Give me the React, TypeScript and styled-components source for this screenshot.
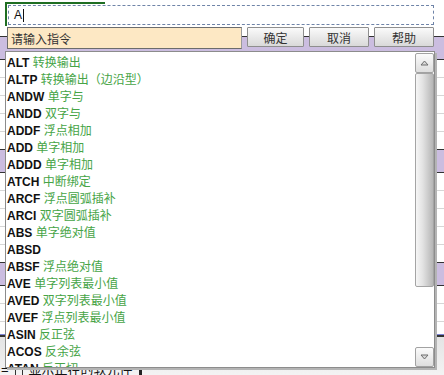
import styled, { createGlobalStyle } from 'styled-components';

const GlobalStyle = createGlobalStyle`
  html, body {
    margin: 0;
    padding: 0;
    background: #fff;
  }
  body {
    font-family: 'Liberation Sans', 'Noto Sans CJK SC', sans-serif;
  }
`;

const Screen = styled.div`
  position: relative;
  width: 444px;
  height: 375px;
  overflow: hidden;
  background: #fff;
`;

// spreadsheet behind the dialog
const Sheet = styled.div`
  display: flex;
  flex-direction: column;
`;

const Band = styled.div<{ $h: number; $bg?: string; $ruled?: boolean }>`
  flex-shrink: 0;
  height: ${(p) => p.$h}px;
  background: ${(p) =>
    p.$ruled
      ? 'repeating-linear-gradient(to bottom, #fff 0, #fff 17px, #d6d6d6 17px, #d6d6d6 18px)'
      : p.$bg ?? '#fff'};
`;

const StatusRow = styled.div`
  flex-shrink: 0;
  height: 40px;
  display: flex;
  align-items: flex-end;
  gap: 6px;
  background: linear-gradient(to bottom, #e4e4e4, #f4f4f4);
  font-size: 13px;
  line-height: 15px;
  color: #111;
  padding-left: 1px;
`;

const StatusBar = styled.span`
  width: 1px;
  height: 13px;
  background: #333;
`;

const StatusBlock = styled.span`
  width: 3px;
  height: 11px;
  background: #222;
`;

const Dialog = styled.div`
  position: absolute;
  left: 5px;
  top: 2px;
  width: 432px;
  display: flex;
  flex-direction: column;
`;

const CommandCell = styled.div`
  position: relative;
  padding: 3px 0 0 3px;
  &::before {
    content: '';
    position: absolute;
    left: 0;
    top: 0;
    width: 100px;
    height: 2px;
    background: #1f6e22;
  }
  &::after {
    content: '';
    position: absolute;
    left: 0;
    top: 0;
    width: 2px;
    height: 24px;
    background: #1f6e22;
  }
`;

const CommandInput = styled.div`
  box-sizing: border-box;
  width: 426px;
  height: 20px;
  border: 1px dashed #6f84a8;
  background: #fff;
  display: flex;
  align-items: center;
  padding-left: 5px;
  font-size: 12px;
  color: #111;
`;

const Caret = styled.span`
  width: 1px;
  height: 13px;
  background: #111;
  margin-left: 1px;
`;

const ActionRow = styled.div`
  display: flex;
  align-items: flex-start;
  gap: 5px;
  margin-top: 2px;
  padding-left: 2px;
`;

const Prompt = styled.div`
  box-sizing: border-box;
  width: 235px;
  height: 22px;
  background: #fde8c4;
  border: 1px solid #6c6c6c;
  border-right-color: #9a9a9a;
  display: flex;
  align-items: center;
  padding-left: 3px;
  font-size: 12px;
  color: #333;
`;

const Button = styled.button<{ $w: number }>`
  box-sizing: border-box;
  width: ${(p) => p.$w}px;
  height: 20px;
  margin: 0;
  padding: 0;
  border: 1px solid #8e8e8e;
  border-radius: 1px;
  background: linear-gradient(to bottom, #fafafa, #e6e6e6 60%, #d9d9d9);
  font-family: 'Noto Sans CJK SC', sans-serif;
  font-size: 12px;
  color: #333;
`;

const ListBox = styled.div`
  box-sizing: border-box;
  width: 430px;
  height: 317px;
  margin-top: 2px;
  border: 1px solid #8c8c8c;
  background: #fff;
  box-shadow: 2px 2px 0 #b4b4b4;
  display: flex;
`;

const Items = styled.div`
  flex: 1;
  overflow: hidden;
  padding: 1px 0 0 1px;
`;

const Item = styled.div`
  height: 17px;
  line-height: 17px;
  white-space: nowrap;
  font-size: 12px;
`;

const Code = styled.span`
  font-family: 'Liberation Sans', sans-serif;
  font-weight: bold;
  color: #111;
`;

const Desc = styled.span`
  font-family: 'Noto Sans CJK SC', sans-serif;
  color: #46a446;
`;

const ScrollBar = styled.div`
  width: 19px;
  display: flex;
  flex-direction: column;
  padding-top: 1px;
`;

const ScrollButton = styled.div`
  box-sizing: border-box;
  height: 20px;
  border: 1px solid #a2a2a2;
  border-radius: 2px;
  background: linear-gradient(to bottom, #fbfbfb, #dedede);
  display: flex;
  align-items: center;
  justify-content: center;
`;

const Thumb = styled.div`
  box-sizing: border-box;
  height: 214px;
  border: 1px solid #a4a4a4;
  border-radius: 2px;
  background: linear-gradient(to right, #f6f6f6, #e2e2e2 40%, #b6b6b6);
`;

const Track = styled.div`
  flex: 1;
`;

const commands: [string, string][] = [
  ['ALT', '转换输出'],
  ['ALTP', '转换输出（边沿型）'],
  ['ANDW', '单字与'],
  ['ANDD', '双字与'],
  ['ADDF', '浮点相加'],
  ['ADD', '单字相加'],
  ['ADDD', '单字相加'],
  ['ATCH', '中断绑定'],
  ['ARCF', '浮点圆弧插补'],
  ['ARCI', '双字圆弧插补'],
  ['ABS', '单字绝对值'],
  ['ABSD', ''],
  ['ABSF', '浮点绝对值'],
  ['AVE', '单字列表最小值'],
  ['AVED', '双字列表最小值'],
  ['AVEF', '浮点列表最小值'],
  ['ASIN', '反正弦'],
  ['ACOS', '反余弦'],
  ['ATAN', '反正切'],
];

function Arrow({ down }: { down?: boolean }) {
  return (
    <svg width="9" height="6" viewBox="0 0 9 6">
      <path
        d={down ? 'M1 1 H8 L4.5 5 Z' : 'M1 5 H8 L4.5 1 Z'}
        fill="#d8d8d8"
        stroke="#6e6e6e"
        strokeWidth="1"
        strokeLinejoin="round"
      />
    </svg>
  );
}

export default function App() {
  return (
    <Screen>
      <GlobalStyle />
      <Sheet>
        <Band $h={36} />
        <Band $h={1} $bg="#333" />
        <Band $h={22} $bg="#cbbde0" />
        <Band $h={1} $bg="#333" />
        <Band $h={89} $ruled />
        <Band $h={1} $bg="#333" />
        <Band $h={22} $bg="#cbbde0" />
        <Band $h={1} $bg="#333" />
        <Band $h={89} $ruled />
        <Band $h={1} $bg="#333" />
        <Band $h={22} $bg="#cbbde0" />
        <Band $h={1} $bg="#333" />
        <Band $h={48} $ruled />
        <Band $h={1} $bg="#7b83d6" />
        <Band $h={2} $bg="#333" />
        <StatusRow>
          <span>=</span>
          <StatusBar />
          <StatusBar />
          <span>显示正在的软元件</span>
          <StatusBlock />
        </StatusRow>
      </Sheet>

      <Dialog>
        <CommandCell>
          <CommandInput>
            A<Caret />
          </CommandInput>
        </CommandCell>
        <ActionRow>
          <Prompt>请输入指令</Prompt>
          <Button $w={57}>确定</Button>
          <Button $w={60}>取消</Button>
          <Button $w={60}>帮助</Button>
        </ActionRow>
        <ListBox>
          <Items>
            {commands.map(([code, desc]) => (
              <Item key={code}>
                <Code>{code}</Code> <Desc>{desc}</Desc>
              </Item>
            ))}
          </Items>
          <ScrollBar>
            <ScrollButton>
              <Arrow />
            </ScrollButton>
            <Thumb />
            <Track />
            <ScrollButton>
              <Arrow down />
            </ScrollButton>
          </ScrollBar>
        </ListBox>
      </Dialog>
    </Screen>
  );
}
